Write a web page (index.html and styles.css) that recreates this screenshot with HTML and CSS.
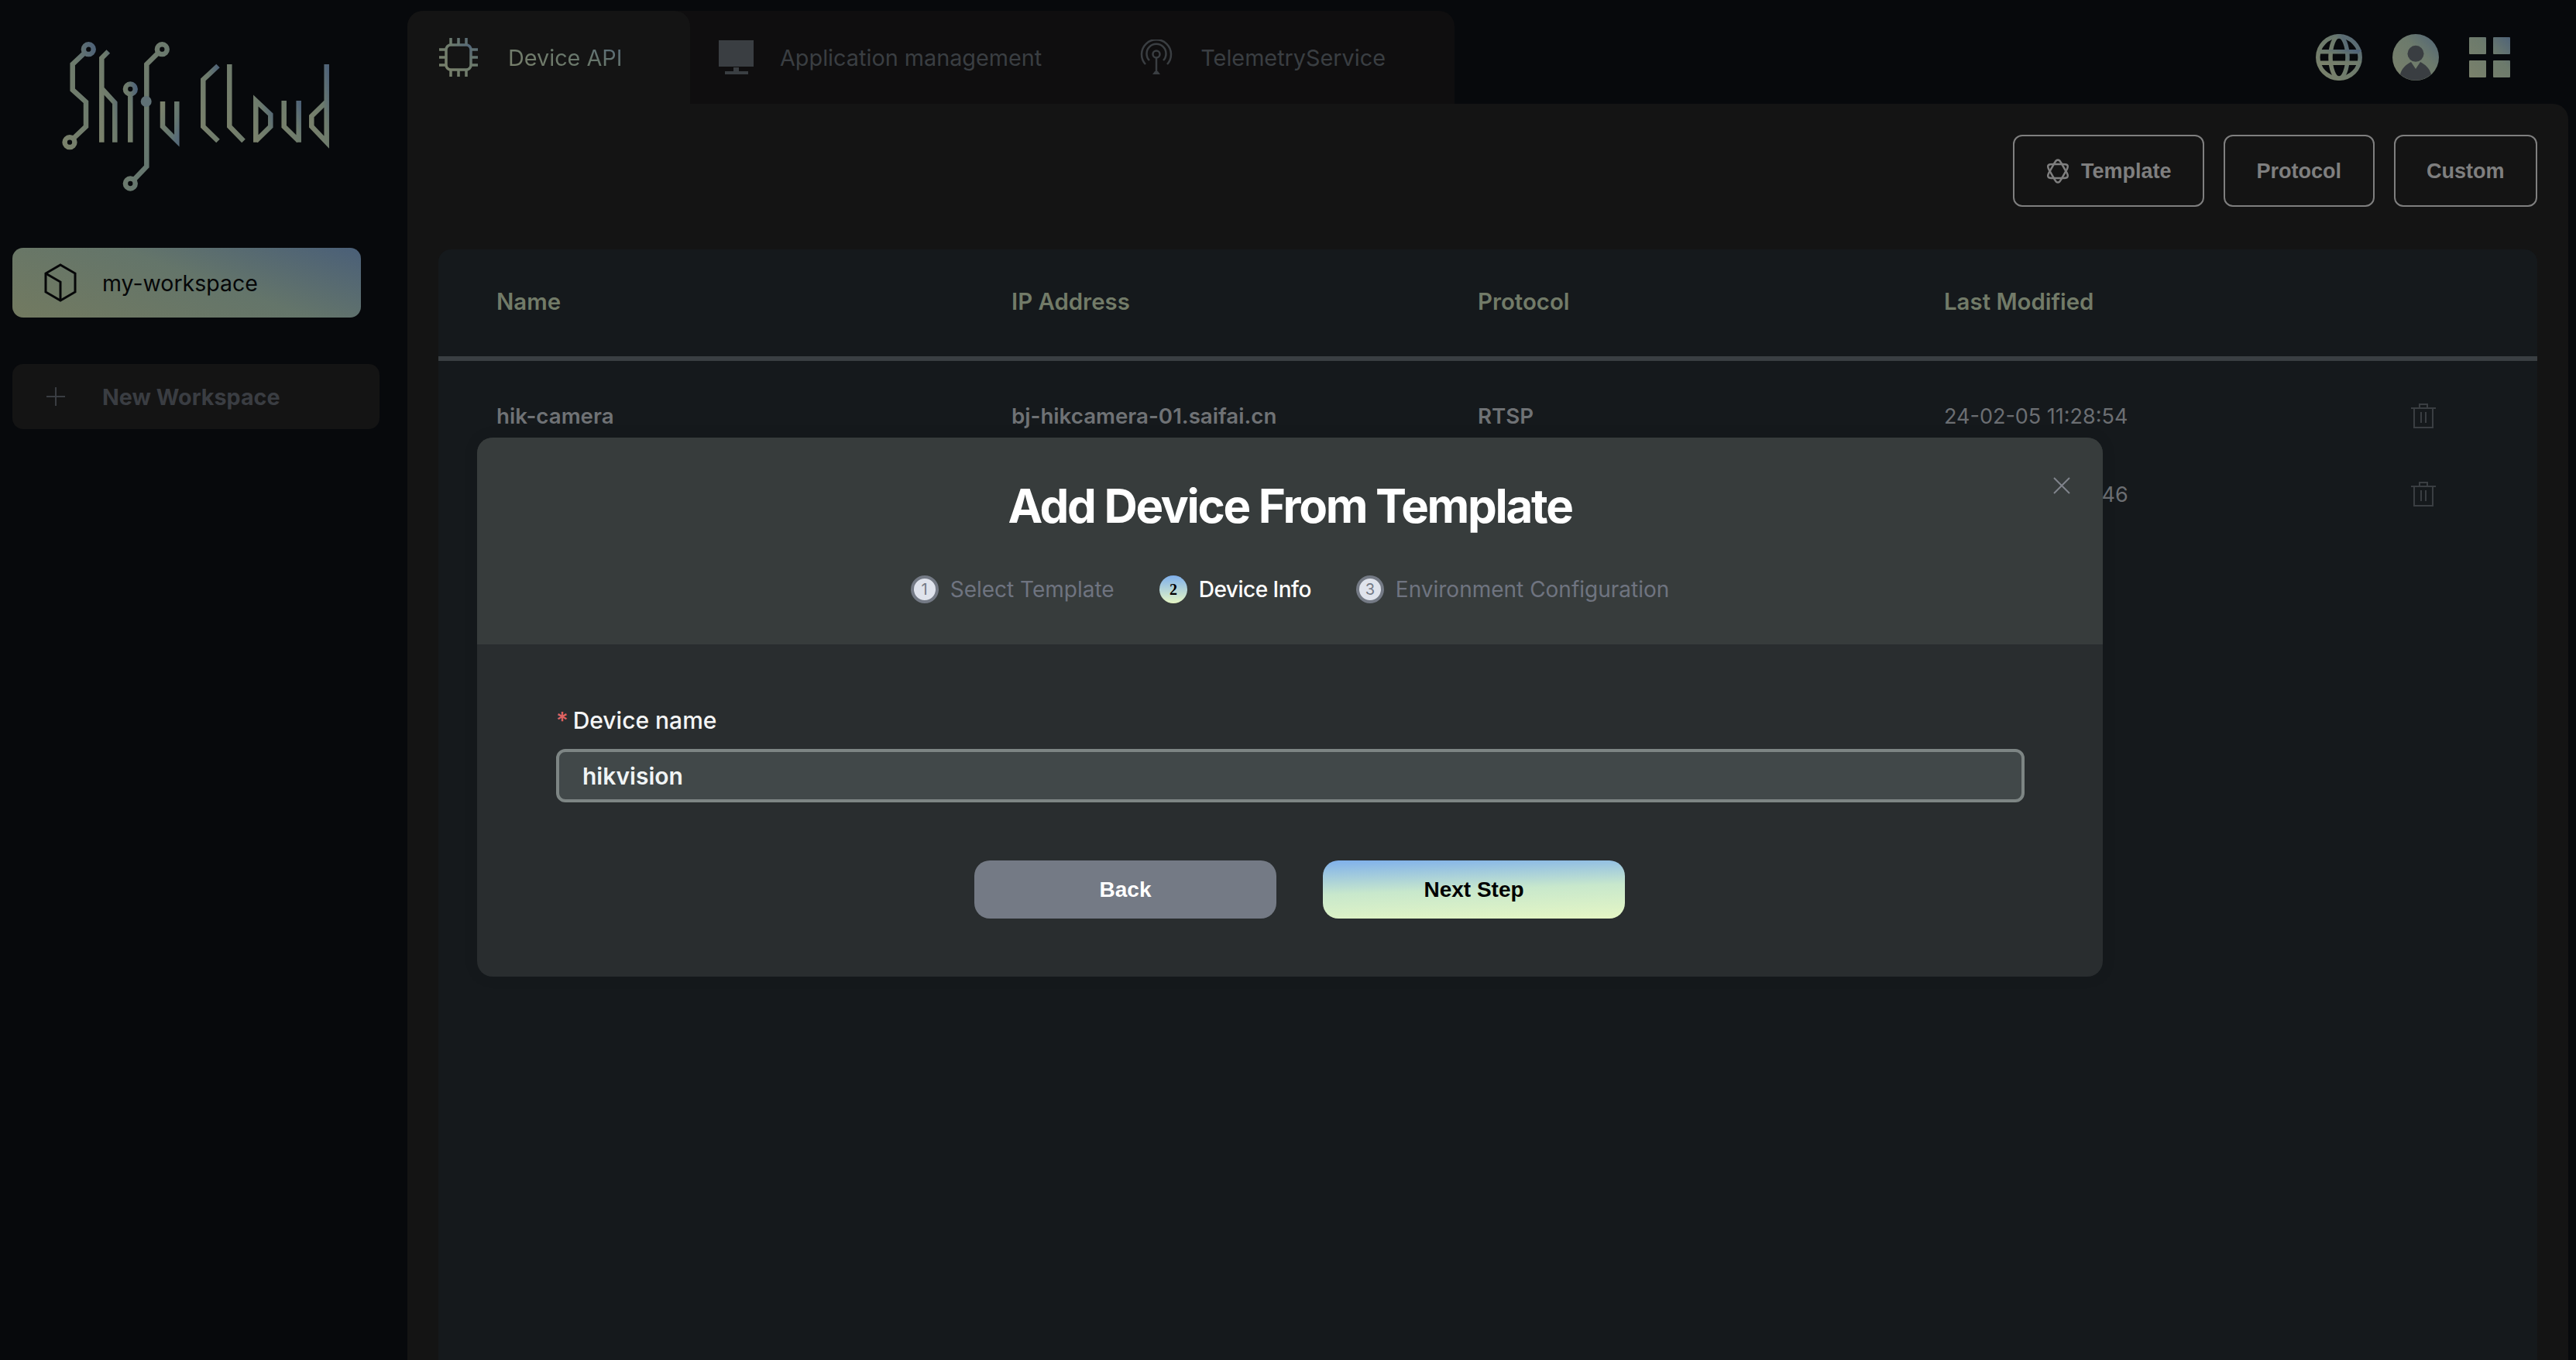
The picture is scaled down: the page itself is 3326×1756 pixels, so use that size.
FILE: index.html
```html
<!DOCTYPE html>
<html lang="en">
<head>
    <meta charset="UTF-8">
    <title>Shifu Cloud</title>
    <link rel="stylesheet" href="styles.css">
</head>
<body>
    <aside class="sidebar">
        <svg class="logo" viewBox="0 0 510 300" width="510" height="300" fill="none" stroke="url(#brand)" stroke-width="6.5">
            <defs>
                <linearGradient id="brand" x1="0" y1="1" x2="1" y2="0">
                    <stop offset="0" stop-color="#7a816b"/>
                    <stop offset="0.6" stop-color="#6c7a6c"/>
                    <stop offset="1" stop-color="#4f6378"/>
                </linearGradient>
                <linearGradient id="brand-down" x1="0" y1="0" x2="1" y2="1">
                    <stop offset="0" stop-color="#7a816b"/>
                    <stop offset="0.7" stop-color="#64766f"/>
                    <stop offset="1" stop-color="#566a78"/>
                </linearGradient>
            </defs>
            <!-- S -->
            <path d="M107.9 63.7a6.4 6.4 0 1 0 12.8 0a6.4 6.4 0 1 0 -12.8 0M109.5 68L93.7 83V116L111 131.7V163.3L94.5 179M83.6 183.7a6.4 6.4 0 1 0 12.8 0a6.4 6.4 0 1 0 -12.8 0"/>
            <!-- h -->
            <path d="M139.8 66.5L131.3 75V183.7M131.3 114.3L148.3 132.7V183.7"/>
            <!-- i -->
            <path d="M161.9 115a6.4 6.4 0 1 0 12.8 0a6.4 6.4 0 1 0 -12.8 0M168.3 121V183.7"/>
            <!-- f -->
            <path stroke="url(#brand-down)" d="M202.9 63.7a6.4 6.4 0 1 0 12.8 0a6.4 6.4 0 1 0 -12.8 0M204.5 68L189.3 83V215L172.5 232.5M161.9 237a6.4 6.4 0 1 0 12.8 0a6.4 6.4 0 1 0 -12.8 0"/>
            <circle cx="188.7" cy="131" r="7" fill="#5f7075" stroke="none"/>
            <!-- u -->
            <path stroke="url(#brand-down)" d="M210 131V163.3L228.3 181.7V131"/>
            <!-- Cloud -->
            <path d="M281.5 85L262.3 103V163.3L281.5 182"/>
            <path d="M296.3 83V163.3L314.5 182"/>
            <path d="M330.3 183.7V130L349.3 148V163.3L330.3 182"/>
            <path d="M366.7 130V163.3L385.7 182V183.7V130"/>
            <path d="M421.7 83V183.7L402.3 163.3V150L421.7 131"/>
        </svg>
        <div class="workspace">
            <svg class="workspace-icon" viewBox="0 0 42 50" width="42" height="50" fill="none" stroke="#060708" stroke-width="3">
                <path d="M21 2L40 13V37L21 48L2 37V13Z"/>
                <path d="M2 13L21 24V48"/>
            </svg>
            <span>my-workspace</span>
        </div>
        <div class="new-workspace">
            <svg viewBox="0 0 24 24" width="24" height="24" stroke="#3a3d42" stroke-width="2">
                <path d="M12 0V24M0 12H24"/>
            </svg>
            <span>New Workspace</span>
        </div>
    </aside>

    <main class="main">
        <div class="topbar">
            <nav class="tabs">
                <div class="tab active">
                    <svg viewBox="0 0 52 52" width="52" height="52" fill="none" stroke="url(#brand)" stroke-width="3.5">
                        <rect x="10" y="10" width="32" height="32" rx="6"/>
                        <path d="M16 10V1M26 10V1M36 10V1M16 42V51M26 42V51M36 42V51M10 16H1M10 26H1M10 36H1M42 16H51M42 26H51M42 36H51"/>
                    </svg>
                    <span>Device API</span>
                </div>
                <div class="tab">
                    <svg viewBox="0 0 45 45" width="45" height="45" fill="#3a3e42">
                        <rect width="45" height="34"/>
                        <rect x="19" y="35" width="7" height="5"/>
                        <rect x="8" y="40" width="30" height="4"/>
                    </svg>
                    <span>Application management</span>
                </div>
                <div class="tab">
                    <svg viewBox="0 0 42 46" width="42" height="46" fill="none" stroke="#3a3e42" stroke-width="2.5">
                        <path d="M7 32A19 19 0 1 1 35 32"/>
                        <path d="M12 27A12.5 12.5 0 1 1 30 27"/>
                        <circle cx="21" cy="19" r="4.5"/>
                        <path d="M21 24V42"/>
                        <path d="M16 45H26L23 41H19Z" fill="#3a3e42" stroke="none"/>
                    </svg>
                    <span>TelemetryService</span>
                </div>
            </nav>
            <div class="top-icons">
                <svg viewBox="0 0 60 60" width="60" height="60" fill="none" stroke="url(#brand)" stroke-width="5.5">
                    <circle cx="30" cy="30" r="27.2"/>
                    <ellipse cx="30" cy="30" rx="11" ry="27.2"/>
                    <path d="M4 22.7H56V22.71M4 37.3H56V37.31"/>
                </svg>
                <svg viewBox="0 0 60 60" width="60" height="60">
                    <circle cx="30" cy="30" r="30" fill="url(#brand)"/>
                    <circle cx="30" cy="25.3" r="10.5" fill="#3a3e42"/>
                    <path d="M10 52C12 44 18 39 24 36L30 45L36 36C42 39 48 44 50 52A30 30 0 0 1 10 52Z" fill="#3a3e42"/>
                </svg>
                <svg class="grid-icon" viewBox="0 0 53 52" width="53" height="52" fill="url(#brand)">
                    <path d="M1 0H21a1 1 0 0 1 1 1V21a1 1 0 0 1 -1 1H1a1 1 0 0 1 -1 -1V1a1 1 0 0 1 1 -1ZM32 0H52a1 1 0 0 1 1 1V21a1 1 0 0 1 -1 1H32a1 1 0 0 1 -1 -1V1a1 1 0 0 1 1 -1ZM1 30H21a1 1 0 0 1 1 1V51a1 1 0 0 1 -1 1H1a1 1 0 0 1 -1 -1V31a1 1 0 0 1 1 -1ZM32 30H52a1 1 0 0 1 1 1V51a1 1 0 0 1 -1 1H32a1 1 0 0 1 -1 -1V31a1 1 0 0 1 1 -1Z"/>
                </svg>
            </div>
        </div>

        <section class="panel">
            <div class="toolbar">
                <button class="tool-btn">
                    <svg viewBox="0 0 30 32" width="30" height="32" fill="none" stroke="#7f7f7f" stroke-width="2.5">
                        <path d="M15 1.5C17 1.5 18 3 19 5L26 17C27.5 20 29 22 27 24C26 25 24 25 21 25H9C6 25 4 25 3 24C1 22 2.5 20 4 17L11 5C12 3 13 1.5 15 1.5Z"/>
                        <path d="M15 30.5C13 30.5 12 29 11 27L4 15C2.5 12 1 10 3 8C4 7 6 7 9 7H21C24 7 26 7 27 8C29 10 27.5 12 26 15L19 27C18 29 17 30.5 15 30.5Z"/>
                    </svg>
                    Template
                </button>
                <button class="tool-btn">Protocol</button>
                <button class="tool-btn">Custom</button>
            </div>

            <div class="table">
                <div class="table-row table-head">
                    <div>Name</div>
                    <div>IP Address</div>
                    <div>Protocol</div>
                    <div>Last Modified</div>
                    <div></div>
                </div>
                <div class="table-body">
                    <div class="table-row">
                        <div class="strong">hik-camera</div>
                        <div class="strong">bj-hikcamera-01.saifai.cn</div>
                        <div class="strong">RTSP</div>
                        <div class="date">24-02-05 11:28:54</div>
                        <div class="trash">
                            <svg viewBox="0 0 32 32" width="32" height="32" fill="none" stroke="#3a3e42" stroke-width="2">
                                <path d="M0 6H32M11 6V1H21V6M4 6V31H28V6M13 11V25M19 11V25"/>
                            </svg>
                        </div>
                    </div>
                    <div class="table-row">
                        <div></div>
                        <div></div>
                        <div></div>
                        <div class="date">24-02-05 11:26:46</div>
                        <div class="trash">
                            <svg viewBox="0 0 32 32" width="32" height="32" fill="none" stroke="#3a3e42" stroke-width="2">
                                <path d="M0 6H32M11 6V1H21V6M4 6V31H28V6M13 11V25M19 11V25"/>
                            </svg>
                        </div>
                    </div>
                </div>
            </div>
        </section>
    </main>

    <div class="modal">
        <svg class="modal-close" viewBox="0 0 22 22" width="22" height="22" stroke="#80848c" stroke-width="2">
            <path d="M1 1L21 21M21 1L1 21"/>
        </svg>
        <div class="modal-head">
            <h1 class="modal-title">Add Device From Template</h1>
            <div class="steps">
                <div class="step">
                    <span class="step-num">1</span>
                    <span>Select Template</span>
                </div>
                <div class="step current">
                    <span class="step-num">2</span>
                    <span>Device Info</span>
                </div>
                <div class="step">
                    <span class="step-num">3</span>
                    <span>Environment Configuration</span>
                </div>
            </div>
        </div>
        <div class="modal-body">
            <label class="field-label"><span class="required">*</span>Device name</label>
            <input class="field-input" type="text" value="hikvision">
            <div class="modal-actions">
                <button class="action-btn back">Back</button>
                <button class="action-btn next">Next Step</button>
            </div>
        </div>
    </div>
</body>
</html>
```

FILE: styles.css
```css
* {
    box-sizing: border-box;
}

body {
    display: flex;
    height: 100vh;
    margin: 0;
    overflow: hidden;
    background-color: #07090c;
    font-family: 'Inter', sans-serif;
    font-size: 30px;
}

/* sidebar */
.sidebar {
    width: 526px;
    flex-shrink: 0;
    padding-left: 16px;
}

.logo {
    display: block;
    margin-left: -16px;
    margin-bottom: 20px;
}

.workspace {
    display: flex;
    align-items: center;
    width: 450px;
    height: 90px;
    padding-left: 41px;
    gap: 33px;
    border-radius: 14px;
    background: linear-gradient(20deg, #727a60 0%, #64756a 55%, #4a5f78 100%);
    color: #060708;
    font-size: 28.5px;
}

.new-workspace {
    display: flex;
    align-items: center;
    width: 474px;
    height: 84px;
    margin-top: 60px;
    padding-left: 44px;
    gap: 48px;
    border-radius: 14px;
    background-color: #141414;
    color: #3a3d42;
    font-size: 28.7px;
    font-weight: 700;
}

/* top bar */
.main {
    flex: 1;
    display: flex;
    flex-direction: column;
    min-width: 0;
    padding: 14px 10px 0 0;
}

.topbar {
    display: flex;
    justify-content: space-between;
    height: 120px;
}

.tabs {
    display: flex;
    width: 1352px;
    border-radius: 20px 20px 0 0;
    background-color: #0f0e0f;
    font-size: 28.8px;
}

.tab {
    display: flex;
    flex-shrink: 0;
    align-items: center;
    padding: 0 127px 0 37px;
    gap: 34px;
    height: 100%;
    color: #3a3e42;
    white-space: nowrap;
}

.tab + .tab + .tab {
    padding-left: 0;
    gap: 36px;
}

.tab.active {
    width: 365px;
    padding: 0 0 0 40px;
    gap: 38px;
    border-radius: 20px 20px 0 0;
    background-color: #141414;
}

.tab.active span {
    background: linear-gradient(20deg, #7a816b 0%, #67766b 60%, #55697c 100%);
    -webkit-background-clip: text;
    background-clip: text;
    color: transparent;
}

.top-icons {
    display: flex;
    align-items: flex-start;
    gap: 39px;
    margin-top: 30px;
    margin-right: 75px;
}

.grid-icon {
    margin-top: 4px;
}

/* panel */
.panel {
    flex: 1;
    display: flex;
    flex-direction: column;
    padding: 40px 40px 0;
    border-radius: 0 20px 0 0;
    background-color: #141414;
}

.toolbar {
    display: flex;
    justify-content: flex-end;
    gap: 25px;
    margin-bottom: 55px;
}

.tool-btn {
    display: flex;
    align-items: center;
    gap: 15px;
    height: 93px;
    padding: 2px 40.5px 0;
    border: 2px solid #7f7f7f;
    border-radius: 12px;
    background: none;
    color: #7f7f7f;
    font-family: 'Liberation Sans', Arial, sans-serif;
    font-size: 27px;
    font-weight: 700;
}

.tool-btn svg {
    margin-top: -2px;
}

.table {
    flex: 1;
    border-radius: 16px 16px 0 0;
    background-color: #15191c;
    color: #6b6e72;
    font-size: 27.7px;
}

.table-row {
    display: grid;
    grid-template-columns: 665px 602px 602px 604px 1fr;
    align-items: center;
    height: 101px;
    padding-left: 75px;
}

.table-head {
    height: 144px;
    padding-bottom: 4px;
    border-bottom: 6px solid #3a3f43;
    color: #727b68;
    font-size: 29.4px;
    font-weight: 600;
}

.table-body {
    padding-top: 20px;
}

.strong {
    font-weight: 600;
    color: #6f7275;
}

.date {
    padding-top: 2px;
    font-size: 27px;
}

.trash {
    display: flex;
    height: 32px;
    margin-left: -1px;
}

/* dialog */
.modal {
    position: absolute;
    left: 616px;
    top: 565px;
    width: 2099px;
    overflow: hidden;
    border-radius: 20px;
    background-color: #292d2f;
    box-shadow: 0 0 20px rgba(0, 0, 0, 0.08);
}

.modal-close {
    position: absolute;
    right: 42px;
    top: 51px;
}

.modal-head {
    padding: 52px 0 53px;
    background-color: #373c3c;
    text-align: center;
}

.modal-title {
    margin: 0 0 54px;
    color: #fff;
    font-size: 60px;
    font-weight: 700;
    letter-spacing: -2.3px;
    line-height: 72px;
}

.steps {
    display: flex;
    justify-content: center;
    gap: 58px;
    font-size: 28px;
}

.step {
    display: flex;
    align-items: center;
    gap: 15px;
    height: 36px;
    color: #6f7480;
}

.step-num {
    display: flex;
    justify-content: center;
    align-items: center;
    width: 36px;
    height: 36px;
    border: 4px solid #747a85;
    border-radius: 50%;
    background-color: #dfe3ec;
    color: #747a85;
    font-size: 20px;
}

.step.current {
    color: #fff;
    font-weight: 500;
    letter-spacing: -0.5px;
}

.step.current .step-num {
    border: none;
    background: linear-gradient(#7fb0ec, #e5f6c4);
    color: #000;
    font-family: 'Liberation Serif', serif;
    font-weight: 700;
}

.modal-body {
    display: flex;
    flex-direction: column;
    padding: 80px 101px 75px 102px;
}

.field-label {
    color: #f4f5f6;
    font-weight: 500;
    line-height: 36px;
}

.required {
    margin-right: 6px;
    color: #e06464;
}

.field-input {
    width: 100%;
    height: 69px;
    margin-top: 19px;
    padding: 0 30px;
    border: 4px solid #7d8584;
    border-radius: 12px;
    background-color: #414849;
    color: #f0f4f5;
    font-family: 'Inter', sans-serif;
    font-size: 30px;
    font-weight: 600;
    outline: none;
}

.modal-actions {
    display: flex;
    gap: 60px;
    margin-top: 75px;
    margin-left: 540px;
}

.action-btn {
    width: 390px;
    height: 75px;
    border: none;
    border-radius: 20px;
    font-family: 'Liberation Sans', Arial, sans-serif;
    font-size: 28px;
    font-weight: 700;
}

.back {
    background-color: #747a85;
    color: #fff;
}

.next {
    background: linear-gradient(178deg, #7fb0ec 0%, #c8e8cc 50%, #e5f6c4 100%);
    color: #000;
}
```
